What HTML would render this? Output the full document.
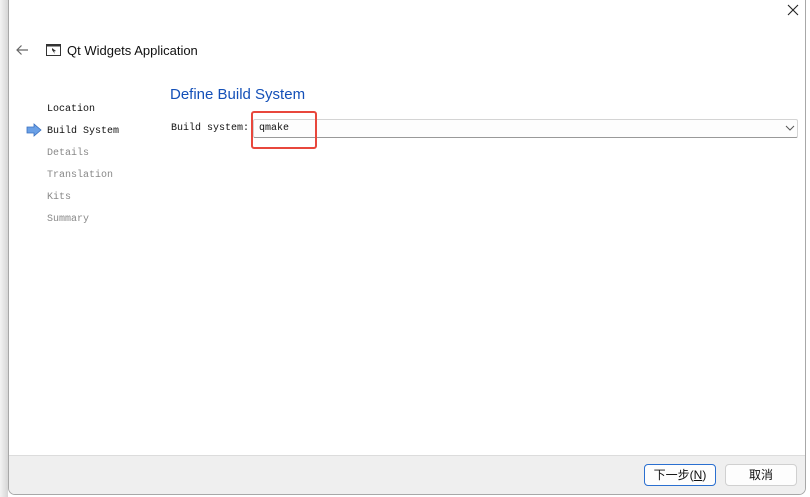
<!DOCTYPE html>
<html><head><meta charset="utf-8"><style>
body{margin:0;width:810px;height:497px;background:#fff;position:relative;overflow:hidden;font-family:"Liberation Sans","Noto Sans CJK SC",sans-serif}
.win{position:absolute;left:8px;top:-2px;width:798px;height:497px;border:1px solid #a8a8a8;border-radius:0 0 7px 7px;background:#fff;box-sizing:border-box;overflow:hidden}
.lg{position:absolute;left:0;top:0;width:8px;height:497px;background:linear-gradient(90deg,#f3f3f3,#d6d6d6)}
.abs{position:absolute}
.mono{font-family:"Liberation Mono","Noto Sans CJK SC",monospace;font-size:10px}
.footer{position:absolute;left:0;top:456px;width:100%;height:60px;background:#efefef;border-top:1px solid #dcdcdc}
.btn{position:absolute;top:464px;width:72px;height:22px;border:1px solid #d0d0d0;border-radius:4px;background:#fdfdfd;box-sizing:border-box;font-size:12px;text-align:center;line-height:20px;color:#111}
</style></head><body>
<div class="lg"></div>
<div class="win">
<div class="footer"></div>
</div>
<svg class="abs" style="left:787px;top:4px" width="12" height="12"><path d="M1 1L11 11M11 1L1 11" stroke="#222" stroke-width="1.1"/></svg>
<svg class="abs" style="left:15px;top:44px" width="14" height="12"><path d="M13 6H2M6.5 1.5L2 6L6.5 10.5" stroke="#666" stroke-width="1.2" fill="none"/></svg>
<svg class="abs" style="left:46px;top:44px" width="15" height="12"><rect x="0.5" y="0.5" width="14" height="11" fill="none" stroke="#333"/><rect x="0.5" y="0.5" width="14" height="2" fill="#333"/><path d="M6 4L10 7L8 7.5L9 10L6 6Z" fill="#333"/></svg>
<div class="abs" style="left:67px;top:43px;font-size:13px;color:#111">Qt Widgets Application</div>
<div class="abs" style="left:170px;top:86px;font-size:15px;color:#1450b8">Define Build System</div>
<div class="abs mono" style="left:47px;top:104px;color:#111">Location</div>
<svg class="abs" style="left:26px;top:123px" width="16" height="14"><path d="M1 4H8V1L15 7L8 13V10H1Z" fill="#6aa0e6" stroke="#3a70c0" stroke-width="0.8"/></svg>
<div class="abs mono" style="left:47px;top:126px;color:#111">Build System</div>
<div class="abs mono" style="left:47px;top:148px;color:#888">Details</div>
<div class="abs mono" style="left:47px;top:170px;color:#888">Translation</div>
<div class="abs mono" style="left:47px;top:192px;color:#888">Kits</div>
<div class="abs mono" style="left:47px;top:214px;color:#888">Summary</div>
<div class="abs mono" style="left:171px;top:123px;color:#111">Build system:</div>
<div class="abs" style="left:253px;top:119px;width:545px;height:19px;border:1px solid #d4d4d4;border-bottom-color:#999;border-radius:2px;box-sizing:border-box;background:#fdfdfd"></div>
<div class="abs mono" style="left:259px;top:123px;color:#111">qmake</div>
<svg class="abs" style="left:785px;top:125px" width="10" height="6"><path d="M1 1L5 5L9 1" stroke="#555" fill="none"/></svg>
<div class="abs" style="left:251px;top:111px;width:66px;height:38px;border:2px solid #e8473c;border-radius:3px;box-sizing:border-box"></div>
<div class="btn" style="left:644px;border-color:#2a6fd0">下一步(<u>N</u>)</div>
<div class="btn" style="left:725px">取消</div>
</body></html>
